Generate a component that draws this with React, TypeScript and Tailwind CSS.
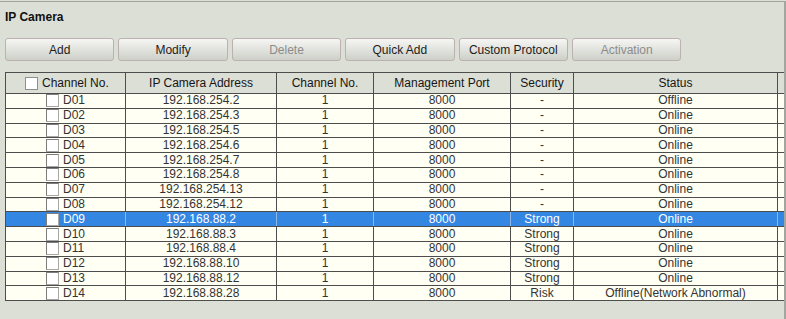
import React from 'react'

// Column widths measured off the grid lines (each cell includes its right border)
const COLS = 'grid grid-cols-[120px_151px_97px_137px_63px_204px_1fr]'

const BUTTONS = [
    { label: 'Add', disabled: false },
    { label: 'Modify', disabled: false },
    { label: 'Delete', disabled: true },
    { label: 'Quick Add', disabled: false },
    { label: 'Custom Protocol', disabled: false },
    { label: 'Activation', disabled: true },
]

const CAMERAS = [
    { ch: 'D01', ip: '192.168.254.2', security: '-', status: 'Offline' },
    { ch: 'D02', ip: '192.168.254.3', security: '-', status: 'Online' },
    { ch: 'D03', ip: '192.168.254.5', security: '-', status: 'Online' },
    { ch: 'D04', ip: '192.168.254.6', security: '-', status: 'Online' },
    { ch: 'D05', ip: '192.168.254.7', security: '-', status: 'Online' },
    { ch: 'D06', ip: '192.168.254.8', security: '-', status: 'Online' },
    { ch: 'D07', ip: '192.168.254.13', security: '-', status: 'Online' },
    { ch: 'D08', ip: '192.168.254.12', security: '-', status: 'Online' },
    { ch: 'D09', ip: '192.168.88.2', security: 'Strong', status: 'Online' },
    { ch: 'D10', ip: '192.168.88.3', security: 'Strong', status: 'Online' },
    { ch: 'D11', ip: '192.168.88.4', security: 'Strong', status: 'Online' },
    { ch: 'D12', ip: '192.168.88.10', security: 'Strong', status: 'Online' },
    { ch: 'D13', ip: '192.168.88.12', security: 'Strong', status: 'Online' },
    { ch: 'D14', ip: '192.168.88.28', security: 'Risk', status: 'Offline(Network Abnormal)' },
]

const SELECTED = 'D09'

function CheckBox({ small }: { small?: boolean }) {
    return (
        <span
            className={
                small
                    ? 'block w-[13px] h-[13px] bg-white border border-[#a7a7a7] border-t-[#7d7d7d] border-l-[#7d7d7d]'
                    : 'block w-[13px] h-[13px] bg-white border border-[#8f8f8f]'
            }
        />
    )
}

function ToolButton({ label, disabled }: { label: string; disabled: boolean }) {
    return (
        <div
            className={`w-[109.4px] h-[23px] flex items-center justify-center rounded-[3px] border border-[#bcb0b0] bg-gradient-to-b from-[#f6f6f4] to-[#cdd0c8] text-[12px] ${
                disabled ? 'text-[#8c8c8c]' : 'text-[#1c1c1c]'
            }`}
        >
            {label}
        </div>
    )
}

export default function App() {
    return (
        <div className="w-[786px] h-[319px] overflow-hidden bg-[#dcdfd6] font-['Liberation_Sans',Arial,sans-serif]">
            <div className="mt-px h-[318px] border-t border-r-2 border-[#a3a69e] pt-[8px]">
                <div className="pl-[5px] h-[14px] leading-[14px] text-[12px] font-bold text-[#111]">IP Camera</div>

                <div className="mt-[14px] ml-[5px] flex gap-1">
                    {BUTTONS.map((b) => (
                        <ToolButton key={b.label} label={b.label} disabled={b.disabled} />
                    ))}
                </div>

                <div className="mt-[11px] ml-[5px] w-[779px] border-t border-l border-[#4d4d4d] text-[12px]">
                    {/* header */}
                    <div className={`${COLS} h-[21px] border-b border-[#4d4d4d] text-[#151515]`}>
                        <div className="flex items-center gap-[4px] pl-[19px] border-r border-[#4d4d4d]">
                            <CheckBox />
                            <span>Channel No.</span>
                        </div>
                        <div className="flex items-center justify-center border-r border-[#4d4d4d]">IP Camera Address</div>
                        <div className="flex items-center justify-center border-r border-[#4d4d4d]">Channel No.</div>
                        <div className="flex items-center justify-center border-r border-[#4d4d4d]">Management Port</div>
                        <div className="flex items-center justify-center border-r border-[#4d4d4d]">Security</div>
                        <div className="flex items-center justify-center border-r border-[#4d4d4d]">Status</div>
                        <div />
                    </div>

                    {/* rows */}
                    {CAMERAS.map((c) => {
                        const sel = c.ch === SELECTED
                        const line = sel ? 'border-r border-[#8fb8ea]' : 'border-r border-[#4d4d4d]'
                        return (
                            <div
                                key={c.ch}
                                className={`${COLS} h-[14.8px] leading-[13px] border-b border-[#4d4d4d] ${
                                    sel ? 'bg-[#3486e3] text-white' : 'bg-[#fffff3] text-[#333]'
                                }`}
                            >
                                <div className={`flex items-center gap-[4px] pl-[40px] ${line}`}>
                                    <CheckBox small />
                                    <span>{c.ch}</span>
                                </div>
                                <div className={`flex items-center justify-center ${line}`}>{c.ip}</div>
                                <div className={`flex items-center justify-center ${line}`}>1</div>
                                <div className={`flex items-center justify-center ${line}`}>8000</div>
                                <div className={`flex items-center justify-center ${line}`}>{c.security}</div>
                                <div className={`flex items-center justify-center ${line}`}>{c.status}</div>
                                <div />
                            </div>
                        )
                    })}
                </div>
            </div>
        </div>
    )
}
